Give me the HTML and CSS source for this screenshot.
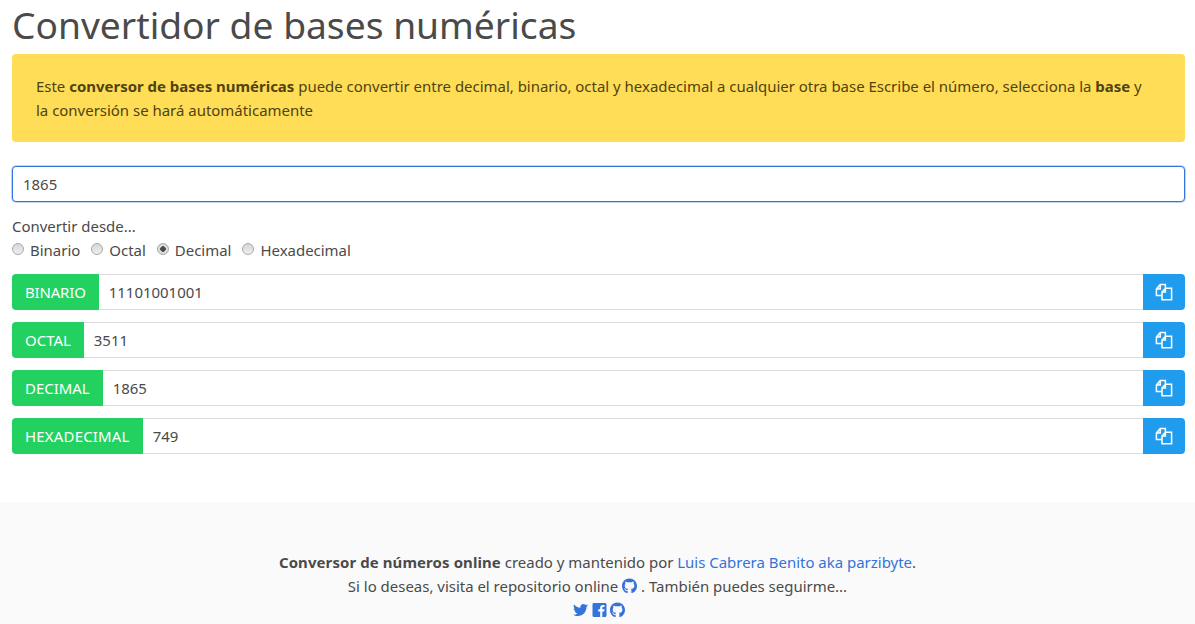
FILE: index.html
```html
<!DOCTYPE html>
<html lang="es">
<head>
<meta charset="utf-8">
<title>Convertidor de bases numéricas</title>
<link rel="stylesheet" href="styles.css">
</head>
<body>
<main class="container">
  <h1 class="title">Convertidor de bases numéricas</h1>
  <div class="alert">Este <strong>conversor de bases numéricas</strong> puede convertir entre decimal, binario, octal y hexadecimal a cualquier otra base Escribe el número, selecciona la <strong>base</strong> y la conversión se hará automáticamente</div>
  <input class="main-input" type="text" value="1865">
  <div class="from-label">Convertir desde...</div>
  <div class="radios">
    <label class="radio"><input type="radio" name="b"><span>Binario</span></label>
    <label class="radio"><input type="radio" name="b"><span>Octal</span></label>
    <label class="radio"><input type="radio" name="b" checked><span>Decimal</span></label>
    <label class="radio"><input type="radio" name="b"><span>Hexadecimal</span></label>
  </div>
  <div class="group"><span class="tag tag-bin">BINARIO</span><span class="value">11101001001</span><button class="copy"><svg class="copy-icon" viewBox="0 0 18 18"><path d="M7 12.5H1.4V6L5.2 1.6H10.4V5.2M5.2 1.6V6H1.4M7 16.8V9L10.4 5.2H16.6V16.8ZM10.4 5.2V9H7"/></svg></button></div>
  <div class="group"><span class="tag">OCTAL</span><span class="value">3511</span><button class="copy"><svg class="copy-icon" viewBox="0 0 18 18"><path d="M7 12.5H1.4V6L5.2 1.6H10.4V5.2M5.2 1.6V6H1.4M7 16.8V9L10.4 5.2H16.6V16.8ZM10.4 5.2V9H7"/></svg></button></div>
  <div class="group"><span class="tag">DECIMAL</span><span class="value">1865</span><button class="copy"><svg class="copy-icon" viewBox="0 0 18 18"><path d="M7 12.5H1.4V6L5.2 1.6H10.4V5.2M5.2 1.6V6H1.4M7 16.8V9L10.4 5.2H16.6V16.8ZM10.4 5.2V9H7"/></svg></button></div>
  <div class="group"><span class="tag tag-hex">HEXADECIMAL</span><span class="value">749</span><button class="copy"><svg class="copy-icon" viewBox="0 0 18 18"><path d="M7 12.5H1.4V6L5.2 1.6H10.4V5.2M5.2 1.6V6H1.4M7 16.8V9L10.4 5.2H16.6V16.8ZM10.4 5.2V9H7"/></svg></button></div>
</main>
<footer class="footer">
  <p class="foot-line"><strong class="foot-strong">Conversor de números online</strong> creado y mantenido por <a href="#">Luis Cabrera Benito aka parzibyte</a>.</p>
  <p class="foot-line">Si lo deseas, visita el repositorio online <a href="#"><svg class="fi" viewBox="0 0 496 512"><path d="M165.9 397.4c0 2-2.3 3.6-5.2 3.6-3.3 0-5.6-1.6-5.6-3.6 0-2 2.3-3.6 5.2-3.6 3-.3 5.6 1.3 5.6 3.6zm-31.1-4.5c-.7 2 1.3 4.3 4.3 4.9 2.6 1 5.6 0 6.2-2s-1.3-4.3-4.3-5c-2.6-.7-5.5.3-6.2 2.1zm44.2-1.7c-2.9.7-4.9 2.6-4.6 4.9.3 2 2.9 3.3 5.9 2.6 2.9-.7 4.9-2.6 4.6-4.6-.3-1.9-3-3.2-5.9-2.9zM244.8 8C106.1 8 0 113.3 0 252c0 110.9 69.8 205.8 169.5 239.2 12.8 2.3 17.3-5.6 17.3-12.1 0-6.2-.3-40.4-.3-61.4 0 0-70 15-84.7-29.8 0 0-11.4-29.1-27.8-36.6 0 0-22.9-15.7 1.6-16 0 0 24.9 2 38.6 25.8 21.9 38.6 58.6 27.5 72.9 20.9 2.3-16 8.8-27.1 16-33.7-55.9-6.2-112.3-14.3-112.3-110.5 0-27.5 7.6-41.3 23.6-58.9-2.6-6.5-11.1-33.3 2.6-67.9 20.9-6.5 69 27 69 27 20-5.6 41.5-8.5 62.8-8.5s42.8 2.9 62.8 8.5c0 0 48.1-33.6 69-27 13.7 34.7 5.2 61.4 2.6 67.9 16 17.7 25.8 31.5 25.8 58.9 0 96.5-58.9 104.2-114.8 110.5 9.2 7.9 17 22.9 17 46.4 0 33.7-.3 75.4-.3 83.6 0 6.5 4.6 14.4 17.3 12.1C428.2 457.8 496 362.9 496 252 496 113.3 383.5 8 244.8 8z"/></svg></a> . También puedes seguirme...</p>
  <p class="foot-line foot-icons">
    <a href="#"><svg class="fi" viewBox="0 0 512 512"><path d="M459.37 151.716c.325 4.548.325 9.097.325 13.645 0 138.72-105.583 298.558-298.558 298.558-59.452 0-114.68-17.219-161.137-47.106 8.447.974 16.568 1.299 25.34 1.299 49.055 0 94.213-16.568 130.274-44.832-46.132-.975-84.792-31.188-98.112-72.772 6.498.974 12.995 1.624 19.818 1.624 9.421 0 18.843-1.3 27.614-3.573-48.081-9.747-84.143-51.98-84.143-102.985v-1.299c13.969 7.797 30.214 12.67 47.431 13.319-28.264-18.843-46.781-51.005-46.781-87.391 0-19.492 5.197-37.36 14.294-52.954 51.655 63.675 129.3 105.258 216.365 109.807-1.624-7.797-2.599-15.918-2.599-24.04 0-57.828 46.782-104.934 104.934-104.934 30.213 0 57.502 12.67 76.67 33.137 23.715-4.548 46.456-13.32 66.599-25.34-7.798 24.366-24.366 44.833-46.132 57.827 21.117-2.273 41.584-8.122 60.426-16.243-14.292 20.791-32.161 39.308-52.628 54.253z"/></svg></a>
    <a href="#"><svg class="fi" viewBox="0 0 448 512"><path d="M448 80v352c0 26.5-21.5 48-48 48h-85.3V302.8h60.6l8.7-67.6h-69.3V192c0-19.6 5.4-32.9 33.5-32.9H384V98.7c-6.2-.8-27.4-2.7-52.2-2.7-51.6 0-87 31.5-87 89.4v49.9H184v67.6h60.9V480H48c-26.5 0-48-21.5-48-48V80c0-26.5 21.5-48 48-48h352c26.5 0 48 21.5 48 48z"/></svg></a>
    <a href="#"><svg class="fi" viewBox="0 0 496 512"><path d="M165.9 397.4c0 2-2.3 3.6-5.2 3.6-3.3 0-5.6-1.6-5.6-3.6 0-2 2.3-3.6 5.2-3.6 3-.3 5.6 1.3 5.6 3.6zm-31.1-4.5c-.7 2 1.3 4.3 4.3 4.9 2.6 1 5.6 0 6.2-2s-1.3-4.3-4.3-5c-2.6-.7-5.5.3-6.2 2.1zm44.2-1.7c-2.9.7-4.9 2.6-4.6 4.9.3 2 2.9 3.3 5.9 2.6 2.9-.7 4.9-2.6 4.6-4.6-.3-1.9-3-3.2-5.9-2.9zM244.8 8C106.1 8 0 113.3 0 252c0 110.9 69.8 205.8 169.5 239.2 12.8 2.3 17.3-5.6 17.3-12.1 0-6.2-.3-40.4-.3-61.4 0 0-70 15-84.7-29.8 0 0-11.4-29.1-27.8-36.6 0 0-22.9-15.7 1.6-16 0 0 24.9 2 38.6 25.8 21.9 38.6 58.6 27.5 72.9 20.9 2.3-16 8.8-27.1 16-33.7-55.9-6.2-112.3-14.3-112.3-110.5 0-27.5 7.6-41.3 23.6-58.9-2.6-6.5-11.1-33.3 2.6-67.9 20.9-6.5 69 27 69 27 20-5.6 41.5-8.5 62.8-8.5s42.8 2.9 62.8 8.5c0 0 48.1-33.6 69-27 13.7 34.7 5.2 61.4 2.6 67.9 16 17.7 25.8 31.5 25.8 58.9 0 96.5-58.9 104.2-114.8 110.5 9.2 7.9 17 22.9 17 46.4 0 33.7-.3 75.4-.3 83.6 0 6.5 4.6 14.4 17.3 12.1C428.2 457.8 496 362.9 496 252 496 113.3 383.5 8 244.8 8z"/></svg></a>
  </p>
</footer>
</body>
</html>
```
FILE: styles.css
```css
* { box-sizing: border-box; }
html, body { margin: 0; padding: 0; }
body {
  background: #fff;
  color: #4a4a4a;
  font-family: "Noto Sans", "Open Sans", sans-serif;
  font-size: 14.96px;
  line-height: 24px;
}
.container { padding: 0 10px 48px 12px; }
.title {
  margin: 0;
  height: 54px;
  font-size: 37.2px;
  font-weight: 400;
  line-height: 50px;
  color: #4a4a4a;
}
.alert {
  height: 88px;
  padding: 20px 32px 20px 24px;
  margin-bottom: 24px;
  background: #ffdd57;
  border-radius: 4px;
  color: #4f4312;
}
.alert strong { font-weight: 700; }
.main-input {
  display: block;
  width: 100%;
  height: 36px;
  padding: 0 10px;
  margin-bottom: 12px;
  border: 1px solid #3273dc;
  border-radius: 4px;
  box-shadow: 0 0 0 1px rgba(50, 115, 220, .3);
  font: inherit;
  color: #4a4a4a;
  outline: none;
}
.radios { display: flex; gap: 11px; margin-bottom: 12px; }
.radio { display: flex; align-items: center; gap: 6px; }
.radio input {
  appearance: none;
  width: 12px;
  height: 12px;
  margin: 0 0 2px;
  border: 1px solid #a9a9a9;
  border-radius: 50%;
  background: linear-gradient(#d6d6d6, #f0f0f0);
}
.radio input:checked {
  background: radial-gradient(circle, #4a4a4a 0 2.5px, #dcdcdc 3px);
}
.group {
  display: flex;
  height: 36px;
  margin-bottom: 12px;
}
.group:last-child { margin-bottom: 0; }
.tag {
  display: flex;
  align-items: center;
  padding: 0 13px;
  background: #23d160;
  color: #fff;
  border-radius: 4px 0 0 4px;
}
.tag-bin { letter-spacing: -.15px; }
.tag-hex { letter-spacing: .2px; }
.value {
  flex: 1;
  display: flex;
  align-items: center;
  padding: 0 10px;
  border-top: 1px solid #dbdbdb;
  border-bottom: 1px solid #dbdbdb;
}
.copy {
  width: 42px;
  padding: 0;
  border: 0;
  background: #209cee;
  border-radius: 0 4px 4px 0;
  display: flex;
  align-items: center;
  justify-content: center;
}
.copy-icon {
  width: 18px;
  height: 18px;
  fill: none;
  stroke: #fff;
  stroke-width: 1.5;
}
.footer {
  height: 122px;
  padding: 48px 0 0;
  background: #fafafa;
  text-align: center;
}
.foot-line { margin: 0; }
.foot-strong { letter-spacing: .1px; }
.foot-line a { color: #3273dc; text-decoration: none; }
.fi { width: 15px; height: 16px; fill: #3273dc; vertical-align: -2px; }
.foot-icons { padding-left: 3px; }
```
